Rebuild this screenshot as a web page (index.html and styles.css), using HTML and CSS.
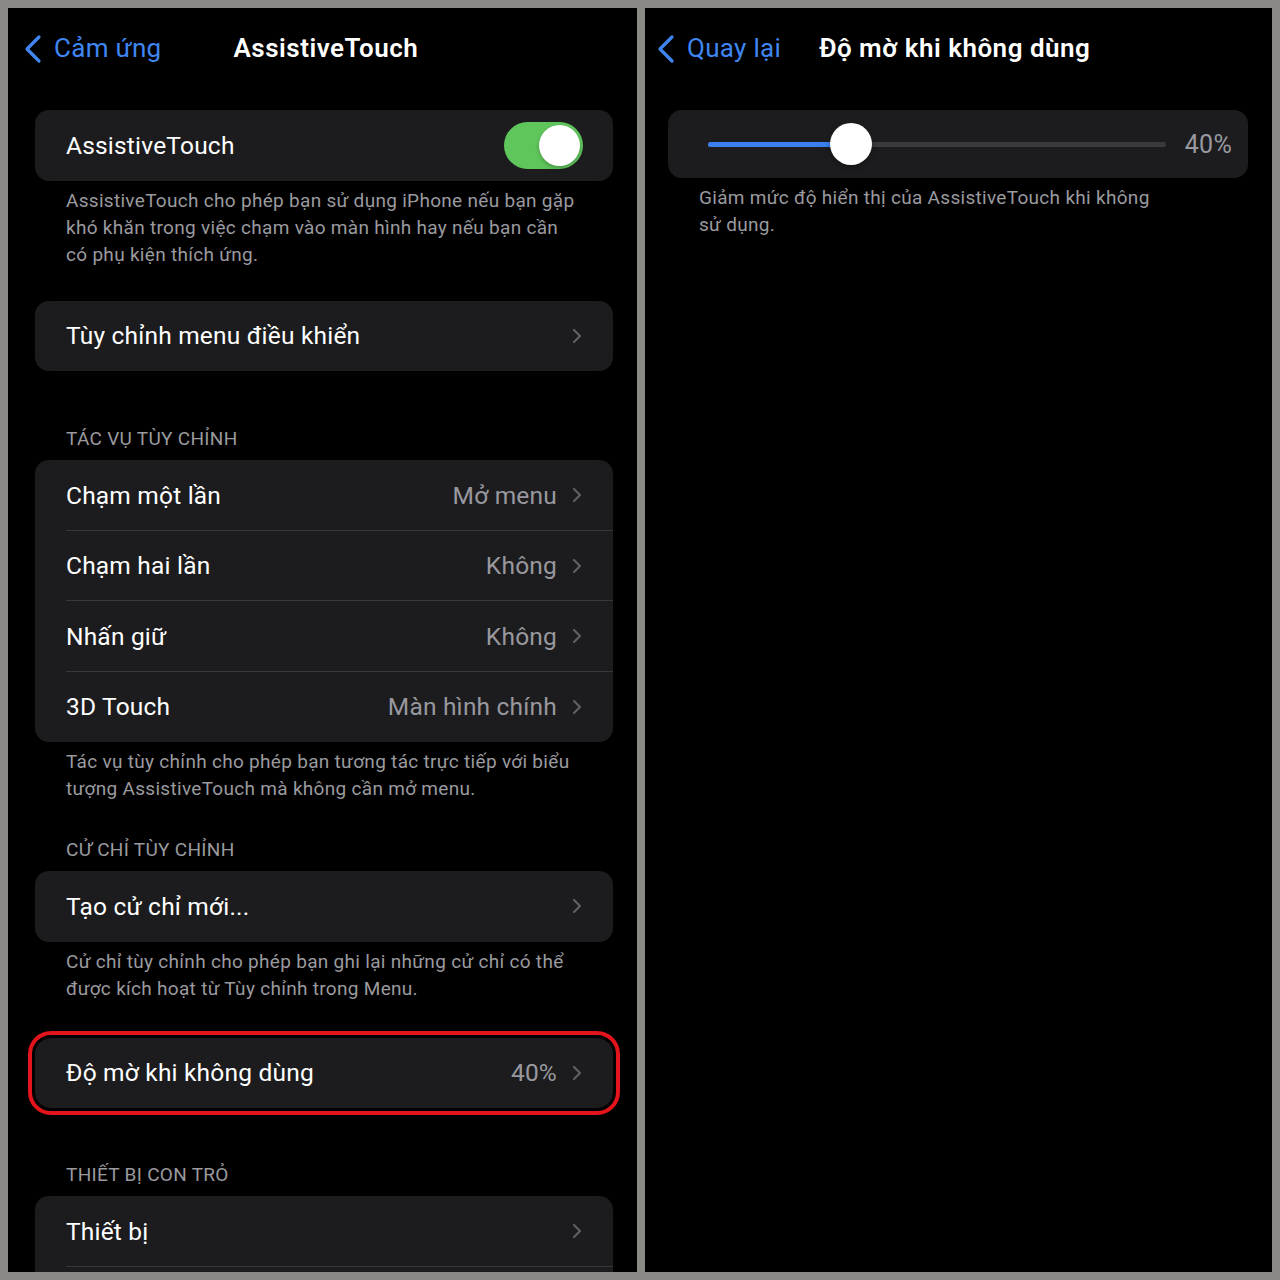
FILE: index.html
```html
<!DOCTYPE html>
<html lang="vi">
<head>
  <meta charset="UTF-8" />
  <title>AssistiveTouch</title>
  <link rel="stylesheet" href="styles.css">
</head>
<body>
  <div class="frame">

    <!-- left screen: AssistiveTouch settings -->
    <div class="screen">
      <div class="nav">
        <div class="back">
          <svg class="back-icon" width="19" height="30" viewBox="0 0 19 30"><path d="M16 3 L4 15 L16 27" fill="none" stroke="currentColor" stroke-width="3.2" stroke-linecap="round" stroke-linejoin="round"/></svg>
          <span>Cảm ứng</span>
        </div>
        <div class="title title-left">AssistiveTouch</div>
      </div>

      <div class="content">
        <div class="card">
          <div class="row">
            <span class="label">AssistiveTouch</span>
            <div class="toggle"><div class="knob"></div></div>
          </div>
        </div>
        <p class="footer">AssistiveTouch cho phép bạn sử dụng iPhone nếu bạn gặp khó khăn trong việc chạm vào màn hình hay nếu bạn cần có phụ kiện thích ứng.</p>

        <div class="card card-gap">
          <div class="row">
            <span class="label">Tùy chỉnh menu điều khiển</span>
            <span class="chev"><svg width="10" height="16" viewBox="0 0 10 16"><path d="M2 2 L8 8 L2 14" fill="none" stroke="currentColor" stroke-width="2.2" stroke-linecap="round" stroke-linejoin="round"/></svg></span>
          </div>
        </div>

        <div class="section after-card">TÁC VỤ TÙY CHỈNH</div>
        <div class="card">
          <div class="row sep">
            <span class="label">Chạm một lần</span>
            <span class="value">Mở menu</span>
            <span class="chev"><svg width="10" height="16" viewBox="0 0 10 16"><path d="M2 2 L8 8 L2 14" fill="none" stroke="currentColor" stroke-width="2.2" stroke-linecap="round" stroke-linejoin="round"/></svg></span>
          </div>
          <div class="row sep">
            <span class="label">Chạm hai lần</span>
            <span class="value">Không</span>
            <span class="chev"><svg width="10" height="16" viewBox="0 0 10 16"><path d="M2 2 L8 8 L2 14" fill="none" stroke="currentColor" stroke-width="2.2" stroke-linecap="round" stroke-linejoin="round"/></svg></span>
          </div>
          <div class="row sep">
            <span class="label">Nhấn giữ</span>
            <span class="value">Không</span>
            <span class="chev"><svg width="10" height="16" viewBox="0 0 10 16"><path d="M2 2 L8 8 L2 14" fill="none" stroke="currentColor" stroke-width="2.2" stroke-linecap="round" stroke-linejoin="round"/></svg></span>
          </div>
          <div class="row">
            <span class="label">3D Touch</span>
            <span class="value">Màn hình chính</span>
            <span class="chev"><svg width="10" height="16" viewBox="0 0 10 16"><path d="M2 2 L8 8 L2 14" fill="none" stroke="currentColor" stroke-width="2.2" stroke-linecap="round" stroke-linejoin="round"/></svg></span>
          </div>
        </div>
        <p class="footer">Tác vụ tùy chỉnh cho phép bạn tương tác trực tiếp với biểu tượng AssistiveTouch mà không cần mở menu.</p>

        <div class="section">CỬ CHỈ TÙY CHỈNH</div>
        <div class="card">
          <div class="row">
            <span class="label">Tạo cử chỉ mới...</span>
            <span class="chev"><svg width="10" height="16" viewBox="0 0 10 16"><path d="M2 2 L8 8 L2 14" fill="none" stroke="currentColor" stroke-width="2.2" stroke-linecap="round" stroke-linejoin="round"/></svg></span>
          </div>
        </div>
        <p class="footer">Cử chỉ tùy chỉnh cho phép bạn ghi lại những cử chỉ có thể được kích hoạt từ Tùy chỉnh trong Menu.</p>

        <div class="card card-gap highlight">
          <div class="row">
            <span class="label">Độ mờ khi không dùng</span>
            <span class="value">40%</span>
            <span class="chev"><svg width="10" height="16" viewBox="0 0 10 16"><path d="M2 2 L8 8 L2 14" fill="none" stroke="currentColor" stroke-width="2.2" stroke-linecap="round" stroke-linejoin="round"/></svg></span>
          </div>
        </div>

        <div class="section after-highlight">THIẾT BỊ CON TRỎ</div>
        <div class="card">
          <div class="row sep">
            <span class="label">Thiết bị</span>
            <span class="chev"><svg width="10" height="16" viewBox="0 0 10 16"><path d="M2 2 L8 8 L2 14" fill="none" stroke="currentColor" stroke-width="2.2" stroke-linecap="round" stroke-linejoin="round"/></svg></span>
          </div>
          <div class="row"></div>
        </div>
      </div>
    </div>

    <!-- right screen: idle opacity -->
    <div class="screen screen-right">
      <div class="nav">
        <div class="back">
          <svg class="back-icon" width="19" height="30" viewBox="0 0 19 30"><path d="M16 3 L4 15 L16 27" fill="none" stroke="currentColor" stroke-width="3.2" stroke-linecap="round" stroke-linejoin="round"/></svg>
          <span>Quay lại</span>
        </div>
        <div class="title title-right">Độ mờ khi không dùng</div>
      </div>

      <div class="content">
        <div class="card slider-card">
          <div class="slider">
            <div class="track">
              <div class="fill" style="width: 31.3%"></div>
              <div class="thumb" style="left: 31.3%"></div>
            </div>
          </div>
          <span class="slider-value">40%</span>
        </div>
        <p class="footer footer-narrow">Giảm mức độ hiển thị của AssistiveTouch khi không sử dụng.</p>
      </div>
    </div>

  </div>
</body>
</html>
```

FILE: styles.css
```css
body {
  margin: 0;
  background: #8b8986;
  font-family: Roboto, 'Liberation Sans', sans-serif;
  color: #fff;
}
.frame {
  display: grid;
  grid-template-columns: 629px 627px;
  gap: 8px;
  padding: 8px;
  height: 1264px;
}
.screen {
  background: #000;
  overflow: hidden;
  padding: 0 24px 0 27px;
}
.screen-right {
  padding: 0 24px 0 23px;
}
.nav {
  height: 80px;
  display: flex;
  align-items: center;
}
.back {
  display: flex;
  align-items: center;
  gap: 12px;
  color: #3f86f2;
  font-size: 26px;
  letter-spacing: 0.3px;
  margin-left: -12px;
}
.back-icon {
  margin-top: 1px;
}
.title {
  font-size: 26px;
  font-weight: 600;
  letter-spacing: 0.5px;
}
.title-left {
  margin-left: 72px;
}
.title-right {
  margin-left: 38px;
}
.content {
  padding-top: 22px;
}
.card {
  background: #1c1c1e;
  border-radius: 14px;
  overflow: hidden;
}
.card-gap {
  margin-top: 33px;
}
.highlight {
  overflow: visible;
  outline: 4px solid #e3141c;
  outline-offset: 3px;
  border-radius: 16px;
  margin-top: 36px;
}
.row {
  height: 70.5px;
  display: flex;
  align-items: center;
  padding: 0 31px;
  position: relative;
  font-size: 24.5px;
  letter-spacing: 0.2px;
}
.row.sep::after {
  content: "";
  position: absolute;
  left: 31px;
  right: 0;
  bottom: 0;
  height: 1px;
  background: #38383a;
}
.label {
  flex: 1;
}
.value {
  color: #98989e;
  margin-right: 15px;
}
.chev {
  color: #5f5f64;
  display: flex;
  align-items: center;
}
.toggle {
  width: 79px;
  height: 47px;
  border-radius: 24px;
  background: #5fc65c;
  position: relative;
  margin-right: -1px;
}
.knob {
  position: absolute;
  right: 3px;
  top: 3px;
  width: 41px;
  height: 41px;
  border-radius: 50%;
  background: #fff;
  box-shadow: 0 2px 4px rgba(0,0,0,0.25);
}
.footer {
  margin: 0;
  padding: 6px 38px 0 31px;
  font-size: 19px;
  line-height: 27px;
  color: #9a9a9f;
  letter-spacing: 0.3px;
}
.footer-narrow {
  padding-right: 90px;
}
.section {
  margin-top: 36px;
  padding: 0 31px 9px;
  font-size: 19px;
  line-height: 24px;
  color: #9a9a9f;
  letter-spacing: 0.3px;
}
.section.after-card {
  margin-top: 56px;
}
.section.after-highlight {
  margin-top: 55px;
}
.slider-card {
  height: 68px;
  display: flex;
  align-items: center;
  padding: 0 16px 0 40px;
  border-radius: 14px;
}
.slider {
  flex: 1;
  margin-right: 19px;
}
.track {
  height: 5px;
  border-radius: 3px;
  background: #3a3a3c;
  position: relative;
}
.fill {
  height: 100%;
  border-radius: 3px;
  background: #3b80f0;
}
.thumb {
  position: absolute;
  top: -19px;
  width: 42px;
  height: 42px;
  margin-left: -21px;
  border-radius: 50%;
  background: #fff;
  box-shadow: 0 2px 6px rgba(0,0,0,0.3);
}
.slider-value {
  font-size: 25px;
  letter-spacing: 0.3px;
  color: #98989e;
}
```
